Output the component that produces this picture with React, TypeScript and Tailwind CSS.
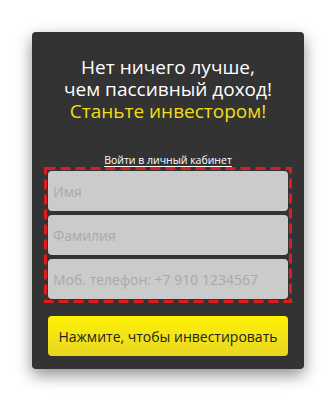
export default function App() {
  const fieldClass =
    "h-10 w-full rounded-[4px] bg-[#cbcbcb] px-[5px] text-[14px] text-[#333] outline-none placeholder:text-[#a9a9a9]"

  return (
    <div className="min-h-[401px] w-full bg-white pt-8 font-['Open_Sans',sans-serif]">
      <div className="mx-auto w-[272px] rounded-[4px] bg-[#333333] pb-[13px] pt-[24px] shadow-[0_6px_16px_rgba(0,0,0,0.45)]">
        <h1 className="flex flex-col items-center text-[19px] leading-[22px] text-white">
          <span>Нет ничего лучше,</span>
          <span>чем пассивный доход!</span>
          <span className="text-[#f4de12]">Станьте инвестором!</span>
        </h1>

        <div className="mt-[31px] text-center text-[10.5px] leading-[14px]">
          <a href="#" className="font-medium text-white underline underline-offset-2">
            Войти в личный кабинет
          </a>
        </div>

        {/* dashed frame round the fields */}
        <div className="relative mx-3 flex flex-col gap-1 p-1">
          <svg className="pointer-events-none absolute inset-0 h-full w-full overflow-visible">
            <rect
              x="1.5"
              y="1.5"
              className="h-[calc(100%-3px)] w-[calc(100%-3px)]"
              fill="none"
              stroke="#e01b1b"
              strokeWidth="3"
              strokeDasharray="10 5"
            />
          </svg>
          <input className={fieldClass} placeholder="Имя" />
          <input className={fieldClass} placeholder="Фамилия" />
          <input className={fieldClass} placeholder="Моб. телефон: +7 910 1234567" />
        </div>

        <button className="mx-4 mt-[13px] h-10 w-[240px] rounded-[4px] bg-gradient-to-b from-[#fff200] to-[#e8d620] text-[14px] text-[#222]">
          Нажмите, чтобы инвестировать
        </button>
      </div>
    </div>
  )
}
